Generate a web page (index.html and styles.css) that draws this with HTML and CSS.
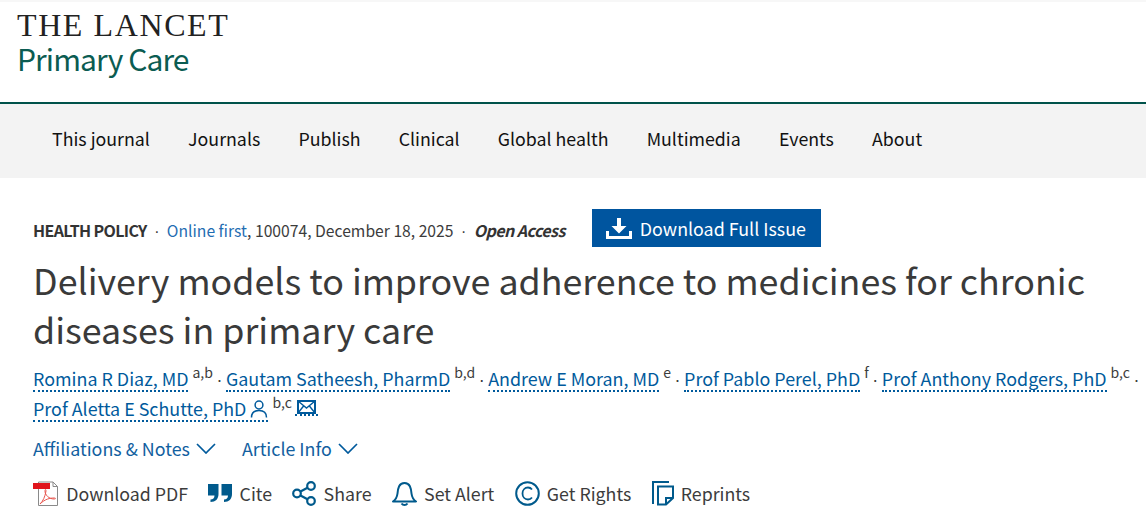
FILE: index.html
```html
<!DOCTYPE html>
<html lang="en">
<head>
<meta charset="utf-8">
<title>Delivery models to improve adherence to medicines for chronic diseases in primary care</title>
<link rel="stylesheet" href="styles.css">
</head>
<body>
<header class="masthead">
  <a class="logo" href="#">
    <span class="logo-top">THE LANCET</span>
    <span class="logo-sub">Primary Care</span>
  </a>
</header>
<nav class="mainnav">
  <a href="#">This journal</a>
  <a href="#">Journals</a>
  <a href="#">Publish</a>
  <a href="#">Clinical</a>
  <a href="#">Global health</a>
  <a href="#">Multimedia</a>
  <a href="#">Events</a>
  <a href="#">About</a>
</nav>
<main class="article">
  <div class="meta">
    <div class="meta-text">
      <strong class="section">HEALTH POLICY</strong>
      <span class="dot">·</span>
      <span><a href="#" class="link">Online first</a>, 100074, December 18, 2025</span>
      <span class="dot">·</span>
      <em class="oa">Open Access</em>
    </div>
    <a class="download" href="#"><svg class="dl-icon" viewBox="0 0 26 21" width="26" height="21"><path d="M11 0h4v8h5.500L13 15.500 5.500 8H11z" fill="#fff"/><path d="M1.500 13v6.500h23V13" fill="none" stroke="#fff" stroke-width="3"/></svg><span>Download Full Issue</span></a>
  </div>
  <h1>Delivery models to improve adherence to medicines for chronic diseases in primary care</h1>
  <ul class="authors">
    <li><a href="#" class="author">Romina R Diaz, MD</a><sup>a,b</sup><span class="sep">·</span></li>
    <li><a href="#" class="author">Gautam Satheesh, PharmD</a><sup>b,d</sup><span class="sep">·</span></li>
    <li><a href="#" class="author">Andrew E Moran, MD</a><sup>e</sup><span class="sep">·</span></li>
    <li><a href="#" class="author">Prof Pablo Perel, PhD</a><sup>f</sup><span class="sep">·</span></li>
    <li><a href="#" class="author">Prof Anthony Rodgers, PhD</a><sup>b,c</sup><span class="sep">·</span></li>
    <li><a href="#" class="author">Prof Aletta E Schutte, PhD<svg class="person" viewBox="0 0 18 18" width="18" height="18"><circle cx="9" cy="5" r="3.900" fill="none" stroke="#005a9c" stroke-width="1.500"/><path d="M1.500 17.500c0-4.500 3-7 7.500-7s7.500 2.500 7.500 7" fill="none" stroke="#005a9c" stroke-width="1.500"/></svg></a><sup>b,c</sup><a href="#" class="mail"><svg viewBox="0 0 19 14" width="19" height="14"><path d="M1 1h17v12H1z" fill="none" stroke="#005a9c" stroke-width="2"/><path d="M1 1l8.500 7L18 1M1 13l6-7.500M18 13l-6-7.500" fill="none" stroke="#005a9c" stroke-width="1.400"/></svg></a></li>
  </ul>
  <div class="toggles">
    <a href="#">Affiliations &amp; Notes<svg viewBox="0 0 20 11" width="20" height="11"><path d="M1 1l9 9 9-9" fill="none" stroke="#005a9c" stroke-width="1.700"/></svg></a>
    <a href="#">Article Info<svg viewBox="0 0 20 11" width="20" height="11"><path d="M1 1l9 9 9-9" fill="none" stroke="#005a9c" stroke-width="1.700"/></svg></a>
  </div>
  <div class="tools">
    <a href="#"><svg class="i-pdf" viewBox="0 0 26 25" width="26" height="25"><path d="M5.500 1H20l4.500 4.500V24.500H5.500z" fill="#fff" stroke="#8a8a8a"/><path d="M20 1v4.500h4.500" fill="none" stroke="#8a8a8a"/><rect x="0" y="2" width="17" height="6" fill="#e0141c"/><path d="M7 23c3-3 5-7 6-13 0-2-1-2-1 0 0 4 4 8 9 8 2 0 2-1 0-1-4 0-9 1-14 6z" fill="none" stroke="#e8564f" stroke-width="1"/></svg>Download PDF</a>
    <a href="#"><svg viewBox="0 0 24 20" width="24" height="20"><path d="M0 1h10.500v10c0 5-3 8-8 8v-2.500c2.500 0 4-1.500 4-4H0zM13.500 1H24v10c0 5-3 8-8 8v-2.500c2.500 0 4-1.500 4-4h-6.500z" fill="#005a8c"/></svg>Cite</a>
    <a href="#"><svg viewBox="0 0 24 25" width="24" height="25"><g fill="none" stroke="#005a8c" stroke-width="2.200"><circle cx="5" cy="12.500" r="3.800"/><circle cx="19" cy="5" r="3.800"/><circle cx="19" cy="20" r="3.800"/><path d="M8.500 10.500l7-3.800M8.500 14.500l7 3.800"/></g></svg>Share</a>
    <a href="#"><svg viewBox="0 0 25 25" width="25" height="25"><path d="M1 20.500c3-2 4-4 4.500-8C6 7 7 2 12.500 2s6.500 5 7 10.500c.5 4 1.500 6 4.500 8z" fill="none" stroke="#005a8c" stroke-width="2" stroke-linejoin="round"/><path d="M9.500 22.500c1.500 2 4.500 2 6 0" fill="none" stroke="#005a8c" stroke-width="2"/></svg>Set Alert</a>
    <a href="#"><svg viewBox="0 0 25 25" width="25" height="25"><circle cx="12.500" cy="12.500" r="11.300" fill="none" stroke="#005a8c" stroke-width="2"/><path d="M17 8.500c-1-1.300-2.500-2-4-2-3.300 0-5.500 2.700-5.500 6s2.200 6 5.500 6c1.500 0 3-.7 4-2" fill="none" stroke="#005a8c" stroke-width="1.800"/></svg>Get Rights</a>
    <a href="#"><svg viewBox="0 0 22 25" width="22" height="25"><g fill="none" stroke="#005a8c" stroke-width="2"><path d="M1 23V1h16"/><path d="M6 5.500h15V17l-7 6.500H6z"/><path d="M14 23v-6h7"/></g></svg>Reprints</a>
  </div>
</main>
</body>
</html>
```
FILE: styles.css
```css
* { box-sizing: border-box; }
html, body { margin: 0; padding: 0; }
body {
  font-family: "Noto Sans CJK SC", "Noto Sans", sans-serif;
  background: #fff;
  color: #3c3c3c;
  height: 519px;
  overflow: hidden;
}
a { text-decoration: none; color: inherit; }

.masthead {
  height: 104px;
  border-top: 2px solid #f7f7f7;
  border-bottom: 2px solid #00524a;
  padding: 7px 0 0 17px;
}
.logo { display: flex; flex-direction: column; align-items: flex-start; }
.logo-top {
  font-family: "Liberation Serif", serif;
  font-size: 32px;
  line-height: 32px;
  letter-spacing: 1.600px;
  color: #222;
}
.logo-sub {
  font-size: 30px;
  line-height: 34px;
  letter-spacing: -0.900px;
  color: #0b5c52;
}

.mainnav {
  height: 74px;
  background: #f3f3f3;
  padding: 0 0 7px 52px;
  display: flex;
  align-items: center;
  gap: 38.150px;
  font-size: 17.800px;
  color: #111;
}

.article { padding: 0 0 0 33px; }

.meta {
  display: flex;
  align-items: center;
  height: 38px;
  margin-top: 31px;
}
.meta-text {
  font-size: 15.700px;
  padding-top: 4px;
  margin-right: 27px;
  display: flex;
  align-items: baseline;
}
.section { font-weight: 600; color: #333; font-size: 16px; letter-spacing: -0.650px; }
.dot { font-family: "Liberation Sans", sans-serif; margin: 0 7.500px; }
.link { color: #1f6db2; }
.oa { font-weight: 600; color: #333; font-size: 16px; letter-spacing: -0.550px; }
.download {
  display: flex;
  align-items: center;
  gap: 8px;
  height: 38px;
  padding: 0 15px 0 14px;
  background: #00559f;
  color: #fff;
  font-size: 17.850px;
}

h1 {
  margin: 8px 0 0;
  padding-right: 33px;
  font-weight: 400;
  font-size: 35.800px;
  line-height: 48.500px;
  color: #3a3a3a;
}

.authors {
  list-style: none;
  margin: 15px 0 0;
  padding: 0;
  display: flex;
  flex-wrap: wrap;
  font-size: 17.900px;
  line-height: 30px;
}
.authors li { display: flex; align-items: baseline; white-space: pre; height: 30px; }
.author {
  color: #005a9c;
  border-bottom: 2px dotted #005a9c;
  line-height: 23px;
  display: inline-flex;
  align-items: baseline;
}
.person { margin-left: 4px; align-self: center; }
sup { font-size: 14px; line-height: 1; margin-left: 4px; position: relative; top: -8px; vertical-align: baseline; }
.sep { font-family: "Liberation Sans", sans-serif; line-height: 23px; margin: 0 3.500px; }
.mail { margin: 0 0 0 3px; border-bottom: 2px dotted #005a9c; padding: 0 2px; line-height: 18px; height: 19px; align-self: flex-start; display: block; }

.toggles {
  display: flex;
  gap: 26px;
  margin-top: 8px;
  font-size: 17.850px;
}
.toggles a { display: flex; align-items: center; gap: 6px; color: #12609f; }

.tools {
  display: flex;
  align-items: center;
  gap: 20.300px;
  margin-top: 19px;
  font-size: 17.800px;
  color: #3c3c3c;
}
.tools a { display: flex; align-items: center; gap: 7.200px; }
```
